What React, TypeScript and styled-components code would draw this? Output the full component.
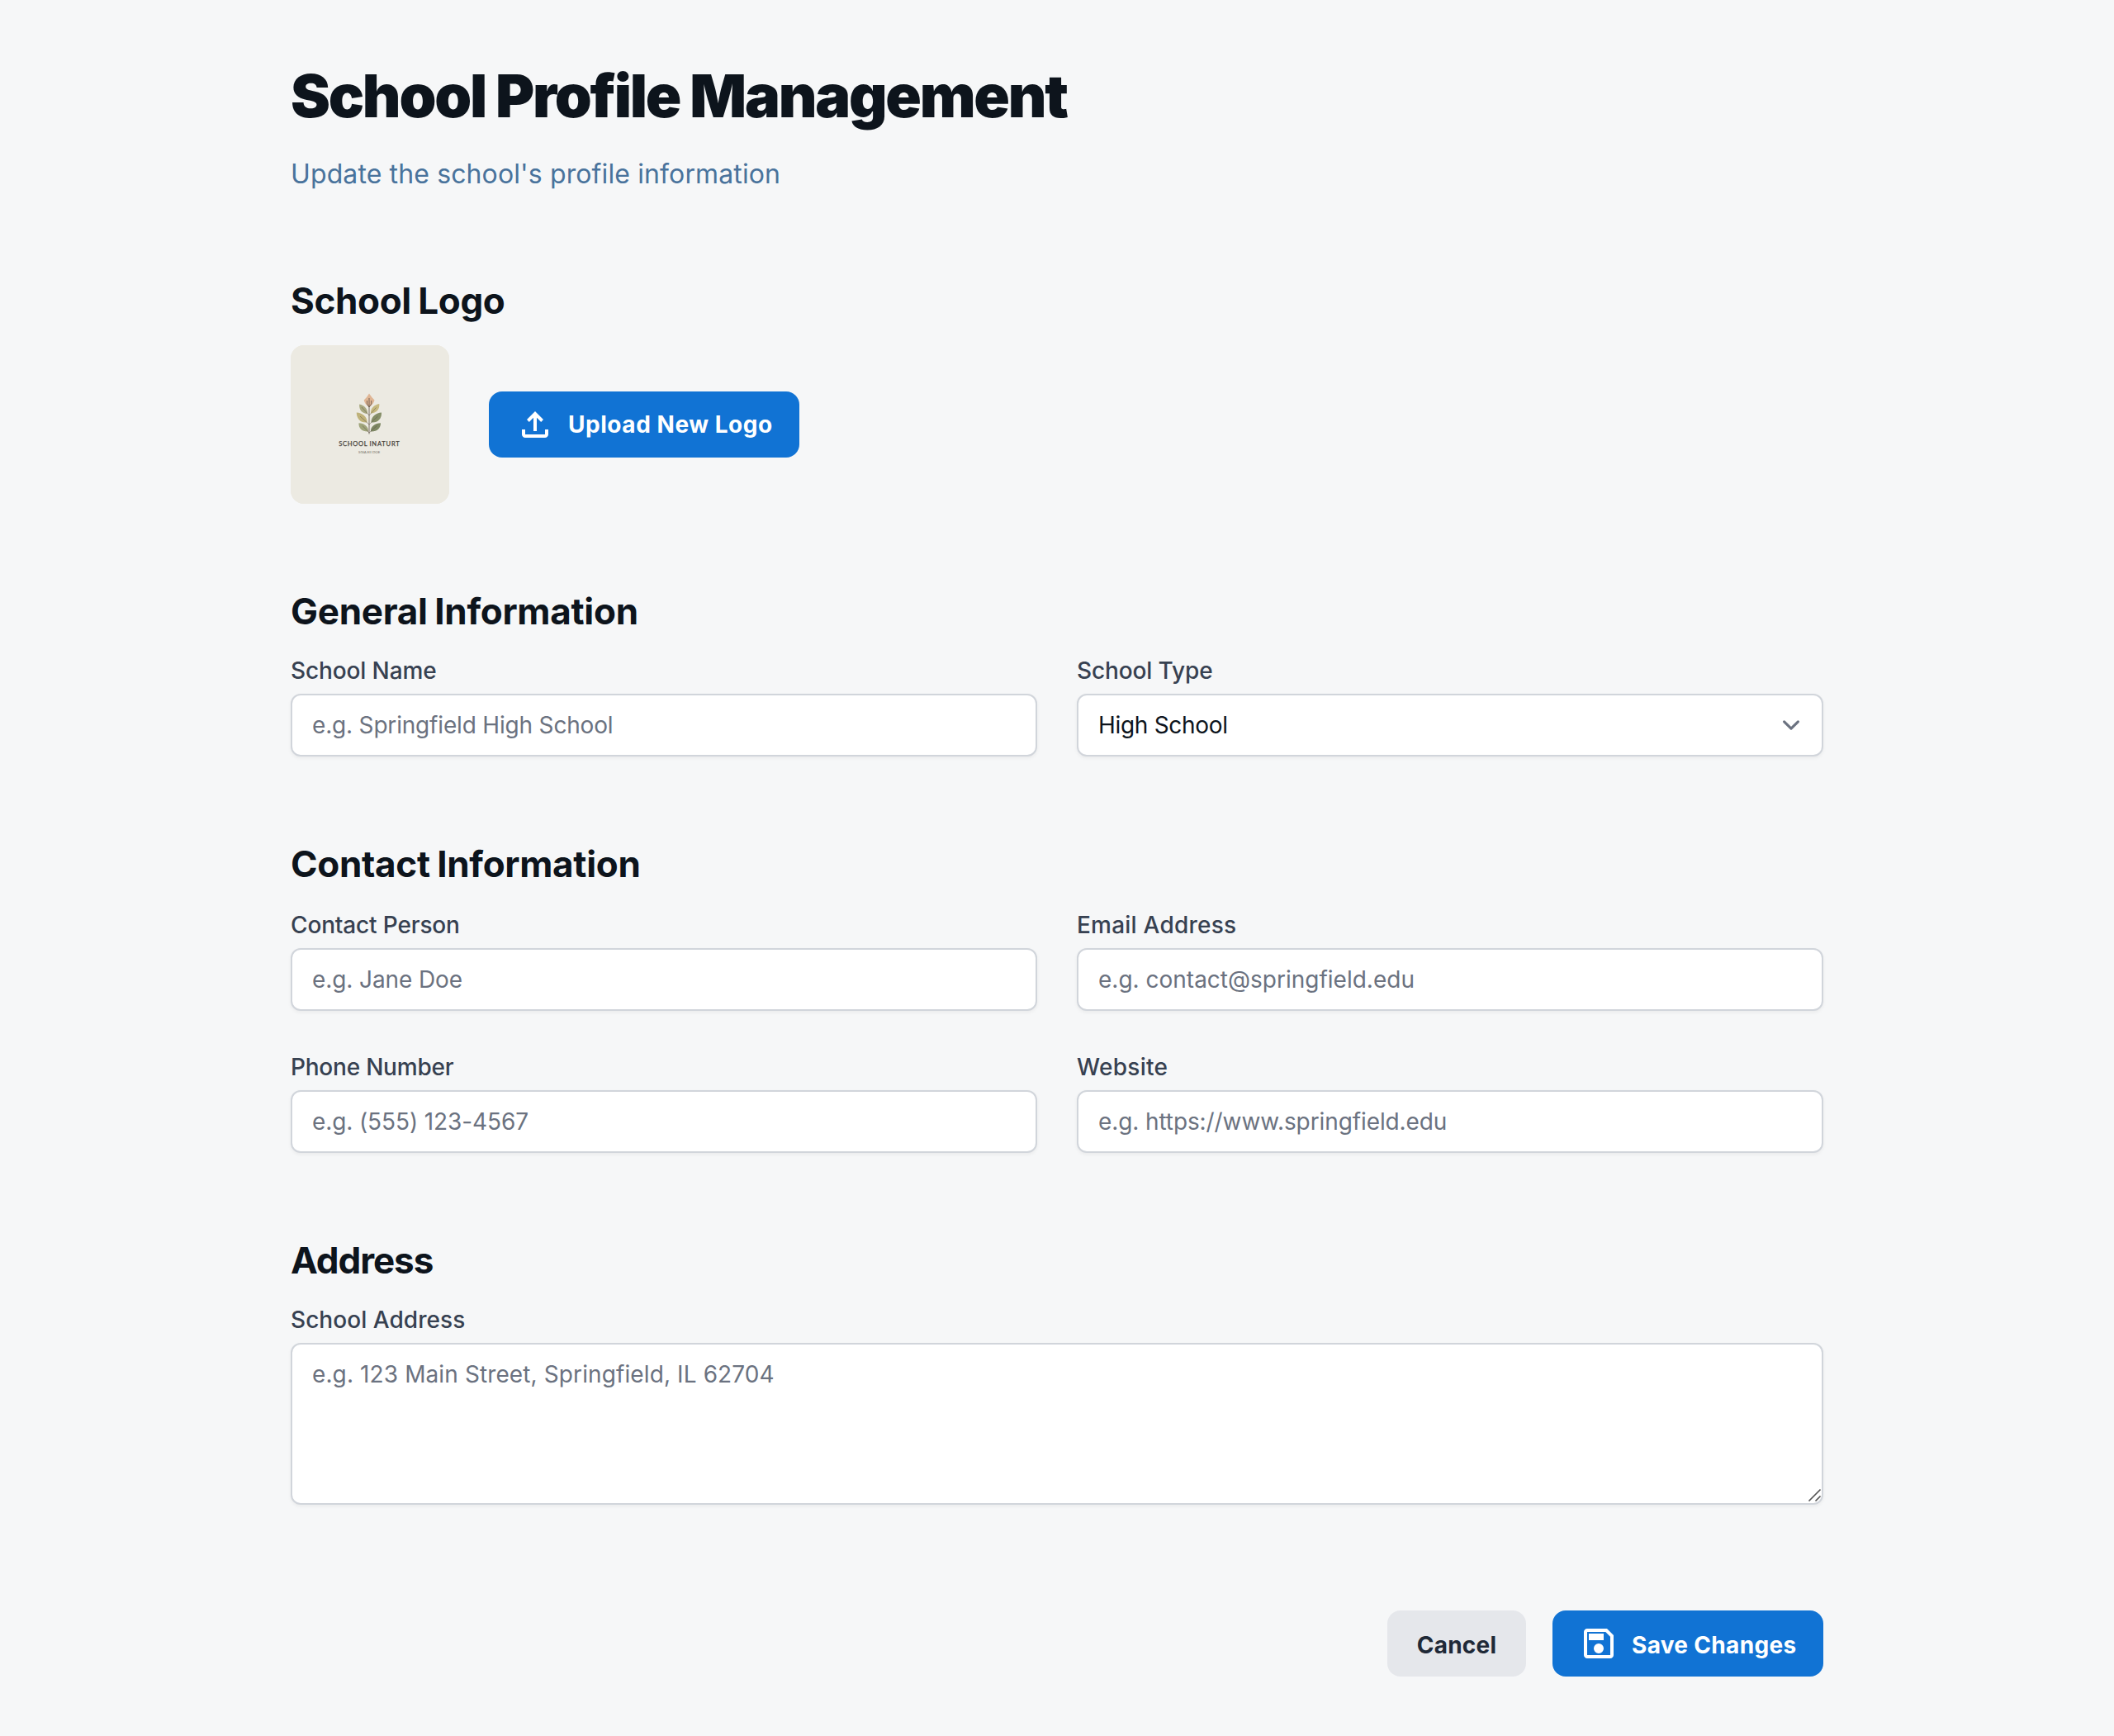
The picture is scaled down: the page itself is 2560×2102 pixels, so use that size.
import React from "react";
import styled, { createGlobalStyle } from "styled-components";

const GlobalStyle = createGlobalStyle`
  *, *::before, *::after { box-sizing: border-box; }
  body {
    margin: 0;
    background: #f6f7f8;
    color: #0d141c;
    font-family: Inter, "Noto Sans", sans-serif;
  }
  h1, h2, p { margin: 0; }
  input, select, textarea, button { font-family: inherit; margin: 0; }
`;

const Page = styled.main`
  width: 1856px;
  height: 2102px;
  margin: 0 auto;
  padding-top: 72px;
`;

const Title = styled.h1`
  font-size: 72px;
  line-height: 88px;
  font-weight: 900;
  letter-spacing: -2.25px;
`;

const Subtitle = styled.p`
  margin-top: 27px;
  font-size: 32px;
  line-height: 48px;
  letter-spacing: 0.12px;
  color: #49739c;
`;

const Section = styled.section<{ $top?: number }>`
  margin-top: ${(p) => p.$top ?? 102}px;
`;

const SectionTitle = styled.h2<{ $gap?: number; $track: number }>`
  font-size: 44px;
  line-height: 56px;
  font-weight: 700;
  letter-spacing: ${(p) => p.$track}px;
  word-spacing: -1.6px;
  margin-bottom: ${(p) => p.$gap ?? 24}px;
`;

const LogoRow = styled.div`
  display: flex;
  align-items: center;
  gap: 48px;
`;

const LogoTile = styled.div`
  width: 192px;
  height: 192px;
  border-radius: 16px;
  overflow: hidden;
  background: #eceae2;
  svg { display: block; }
`;

const FieldGrid = styled.div`
  display: grid;
  grid-template-columns: 1fr 1fr;
  gap: 48px;
`;

const Field = styled.div`
  display: flex;
  flex-direction: column;
  gap: 8px;
`;

const Label = styled.label<{ $track?: number }>`
  font-size: 28px;
  line-height: 40px;
  font-weight: 500;
  letter-spacing: ${(p) => p.$track ?? 0}px;
  color: #374151;
`;

const control = `
  display: block;
  width: 100%;
  border: 2px solid #d1d5db;
  border-radius: 12px;
  background: #fff;
  padding: 16px 24px;
  font-size: 28px;
  line-height: 40px;
  color: #0d141c;
  box-shadow: 0 2px 4px rgba(0, 0, 0, 0.05);
  outline: none;
  &::placeholder { color: #6b7280; opacity: 1; }
`;

const TextInput = styled.input<{ $track?: number }>`
  ${control}
  height: 76px;
  letter-spacing: ${(p) => p.$track ?? 0}px;
`;

const SelectInput = styled.select`
  ${control}
  height: 76px;
  letter-spacing: -0.3px;
  appearance: none;
`;

const TextArea = styled.textarea`
  ${control}
  height: 196px;
  letter-spacing: 0.11px;
  resize: none;
`;

const ControlWrap = styled.div`
  position: relative;
`;

const Chevron = styled.svg`
  position: absolute;
  right: 18px;
  top: 17px;
  pointer-events: none;
`;

const Grip = styled.svg`
  position: absolute;
  right: 2px;
  bottom: 2px;
  pointer-events: none;
`;

const Actions = styled.div`
  display: flex;
  justify-content: flex-end;
  gap: 32px;
  margin-top: 128px;
`;

const Button = styled.button<{ $primary?: boolean; $width: number }>`
  display: flex;
  align-items: center;
  justify-content: ${(p) => (p.$primary ? "flex-start" : "center")};
  gap: 16px;
  width: ${(p) => p.$width}px;
  height: 80px;
  padding: 0 32px;
  border: 0;
  border-radius: 16px;
  font-size: 28px;
  line-height: 42px;
  font-weight: 700;
  white-space: nowrap;
  color: ${(p) => (p.$primary ? "#fff" : "#1f2937")};
  background: ${(p) => (p.$primary ? "#1173d4" : "#e5e7eb")};
  svg { flex: none; }
`;

const ButtonText = styled.span<{ $track: number; $drop?: number }>`
  letter-spacing: ${(p) => p.$track}px;
  padding-top: ${(p) => p.$drop ?? 0}px;
`;

const Icon = ({ d }: { d: string }) => (
  <svg width="48" height="48" viewBox="0 -960 960 960" fill="currentColor" aria-hidden="true">
    <path d={d} />
  </svg>
);

const UPLOAD =
  "M440-320v-326L336-542l-56-58 200-200 200 200-56 58-104-104v326h-80ZM240-160q-33 0-56.5-23.5T160-240v-120h80v120h480v-120h80v120q0 33-23.5 56.5T720-160H240Z";
const SAVE =
  "M840-680v480q0 33-23.5 56.5T760-120H200q-33 0-56.5-23.5T120-200v-560q0-33 23.5-56.5T200-840h480l160 160Zm-80 34L646-760H200v560h560v-446ZM480-240q50 0 85-35t35-85q0-50-35-85t-85-35q-50 0-85 35t-35 85q0 50 35 85t85 35ZM240-560h360v-160H240v160Z";

const SchoolLogo = () => (
  <svg width="192" height="192" viewBox="0 0 192 192" role="img" aria-label="School logo">
    <rect width="192" height="192" fill="#eceae2" />
    <path d="M95 58.5Q98 63 101.5 66.5Q100 72 95 75Q90 72 88.7 66.5Q92.5 63 95 58.5Z" fill="#dfb594" />
    <path d="M83.2 71.5C89 72.5 93.5 77 93 83C86.5 83 82.5 78 83.2 71.5Z" fill="#a8a880" />
    <path d="M107.3 71C101 72 96.5 76.5 97 82.5C103.5 82.5 108 77.5 107.3 71Z" fill="#c6b97f" />
    <path d="M79.8 81.5C87 82 93 87 92.5 93.5C85 94.5 79.5 89 79.8 81.5Z" fill="#bfb27a" />
    <path d="M110 81.5C103 82 97 87 97.5 93.5C105 94.5 110.5 89 110 81.5Z" fill="#868f69" />
    <path d="M82.5 94.3C89 94.5 94.5 98.5 94 104.5C87 105 82 101 82.5 94.3Z" fill="#a0a57c" />
    <path d="M109 94.3C102 94.5 96.5 98.5 97 104.5C104 105 109 101 109 94.3Z" fill="#7d8763" />
    <g fill="none" stroke="#5d5145" strokeWidth="0.8">
      <path d="M95 64V107.5M92.5 67V71L95 75L97.7 71V67" />
      <path d="M86 75L95 85L103.5 75.5M84 86L95 96L105.5 86M87 97.5L95 106L104.5 97.5" strokeWidth="0.5" />
    </g>
    <g fontFamily="Lato, sans-serif" fill="#4b453d">
      <text x="58.3" y="122" textLength="34.4" fontSize="7.6" stroke="#4b453d" strokeWidth="0.25">SCHOOL</text>
      <text x="95.4" y="122" textLength="36.4" fontSize="7.6" stroke="#4b453d" strokeWidth="0.25">INATURT</text>
      <text x="82" y="130.8" textLength="26.4" fontSize="4.4" fill="#6f6a61">SGIA EII DOE</text>
    </g>
  </svg>
);

type InputFieldProps = {
  id: string;
  label: string;
  placeholder: string;
  labelTrack?: number;
  track?: number;
};

const InputField = ({ id, label, placeholder, labelTrack, track }: InputFieldProps) => (
  <Field>
    <Label htmlFor={id} $track={labelTrack}>
      {label}
    </Label>
    <TextInput id={id} placeholder={placeholder} $track={track} />
  </Field>
);

export default function App() {
  return (
    <>
      <GlobalStyle />
      <Page>
        <Title>School Profile Management</Title>
        <Subtitle>Update the school's profile information</Subtitle>

        <Section $top={101}>
          <SectionTitle $gap={26} $track={-0.36}>School Logo</SectionTitle>
          <LogoRow>
            <LogoTile>
              <SchoolLogo />
            </LogoTile>
            <Button $primary $width={376}>
              <Icon d={UPLOAD} />
              <ButtonText $track={0.54}>Upload New Logo</ButtonText>
            </Button>
          </LogoRow>
        </Section>

        <Section>
          <SectionTitle $track={-0.28}>General Information</SectionTitle>
          <FieldGrid>
            <InputField id="name" label="School Name" placeholder="e.g. Springfield High School" labelTrack={-0.12} track={-0.18} />
            <Field>
              <Label htmlFor="type" $track={-0.12}>School Type</Label>
              <ControlWrap>
                <SelectInput id="type" defaultValue="High School">
                  <option>High School</option>
                </SelectInput>
                <Chevron width="42" height="42" viewBox="0 0 20 20" fill="none">
                  <path d="m6 8 4 4 4-4" stroke="#6b7280" strokeWidth="1.5" strokeLinecap="round" strokeLinejoin="round" />
                </Chevron>
              </ControlWrap>
            </Field>
          </FieldGrid>
        </Section>

        <Section>
          <SectionTitle $gap={26} $track={-0.3}>Contact Information</SectionTitle>
          <FieldGrid>
            <InputField id="person" label="Contact Person" placeholder="e.g. Jane Doe" labelTrack={-0.15} track={-0.1} />
            <InputField id="email" label="Email Address" placeholder="e.g. contact@springfield.edu" labelTrack={0.22} />
            <InputField id="phone" label="Phone Number" placeholder="e.g. (555) 123-4567" labelTrack={-0.22} track={-0.1} />
            <InputField id="site" label="Website" placeholder="e.g. https://www.springfield.edu" labelTrack={0.3} track={-0.1} />
          </FieldGrid>
        </Section>

        <Section>
          <SectionTitle $track={-1.06}>Address</SectionTitle>
          <Field>
            <Label htmlFor="address" $track={0.05}>School Address</Label>
            <ControlWrap>
              <TextArea id="address" placeholder="e.g. 123 Main Street, Springfield, IL 62704" />
              <Grip width="18" height="20" viewBox="0 0 18 20" fill="none" stroke="#555" strokeWidth="1.7">
                <path d="M2.5 17.5L16.5 3.5M10.5 17.5L16.5 11.5" />
              </Grip>
            </ControlWrap>
          </Field>
        </Section>

        <Actions>
          <Button $width={168}>
            <ButtonText $track={0.2} $drop={4}>Cancel</ButtonText>
          </Button>
          <Button $primary $width={328}>
            <Icon d={SAVE} />
            <ButtonText $track={0.32} $drop={4}>Save Changes</ButtonText>
          </Button>
        </Actions>
      </Page>
    </>
  );
}
